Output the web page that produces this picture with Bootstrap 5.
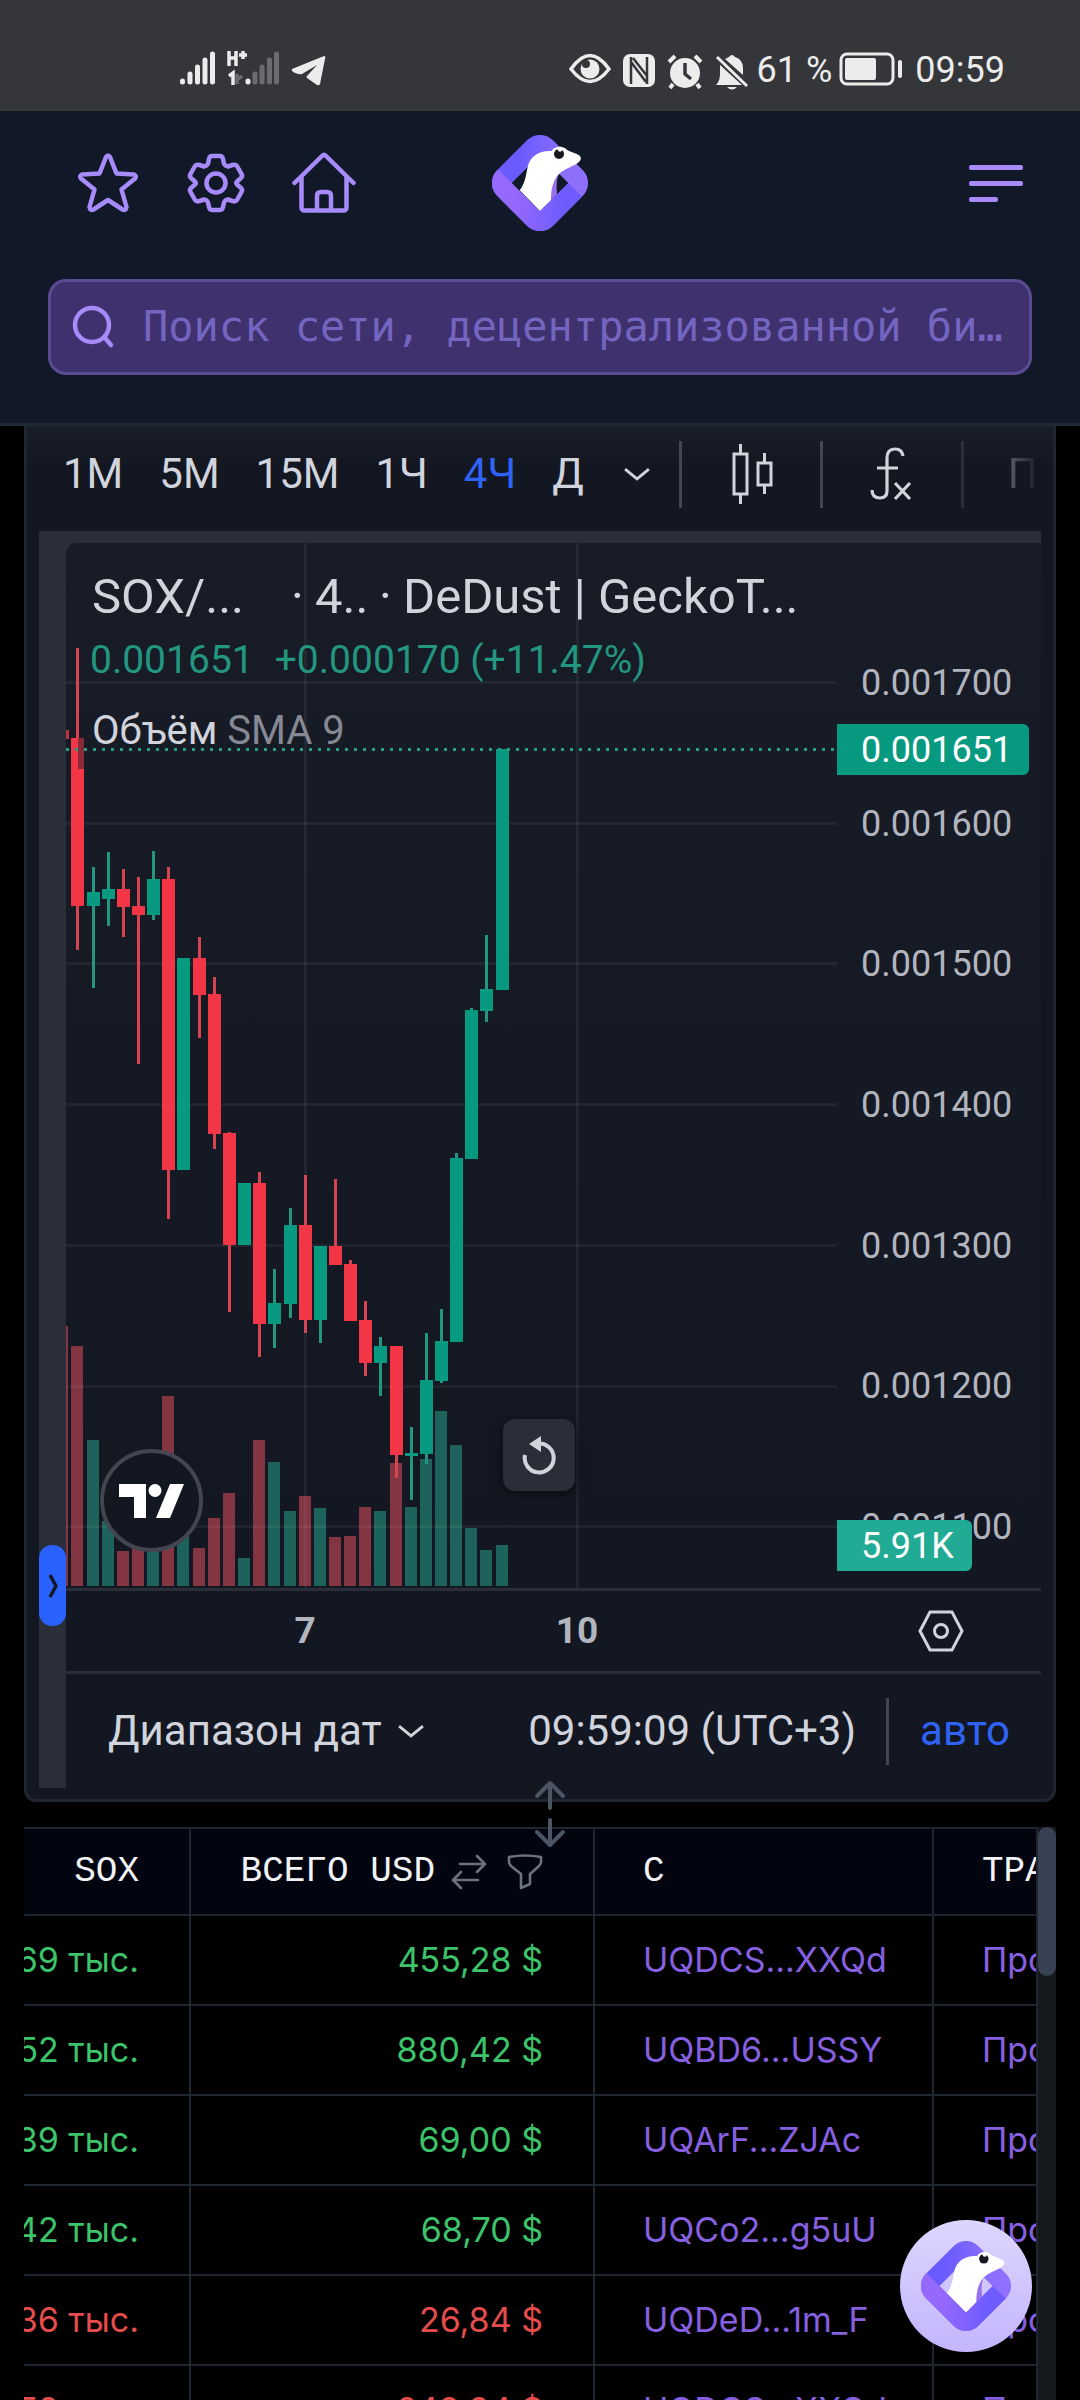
<!DOCTYPE html>
<html lang="ru" data-bs-theme="dark">
<head>
<meta charset="utf-8">
<meta name="viewport" content="width=device-width, initial-scale=1">
<title>SOX / DeDust</title>
<link href="https://cdn.jsdelivr.net/npm/bootstrap@5.3.0/dist/css/bootstrap.min.css" rel="stylesheet">
<style>
body{background:#000;font-family:Inter,"Liberation Sans",sans-serif;color:#e5e7eb;height:100vh;overflow:hidden}
svg{display:block;flex:none}
.phone-bar{height:111px;background:#35363a;color:#ececec;padding:46px 75px 0 179px;font:36px/48px Roboto,sans-serif}
.ic-plane{margin:9px 0 0 12px}
.ic-eye{margin:6px 12px 0 0}
.ic-battery{margin:6px 12px 0 7px}
.site-head{background:#111827;border-bottom:3px solid #1f2937;height:315px;padding:0 48px}
.head-icons{height:144px;padding:0 9px 0 30px}
.head-icons a,.head-icons button{color:#a78bfa;background:none;border:0;padding:0}
.home-link{margin-left:46px}
.search-box{height:96px;margin-top:24px;border:3px solid #5b4b92;border-radius:18px;background:#3f316e;padding:0 21px}
.search-box input{font:42px/60px "DejaVu Sans Mono",monospace;background:none;border:0;outline:0;color:#fff;min-width:0;margin-left:27px;padding:0;text-overflow:ellipsis}
.search-box input::placeholder{color:#7365c0;opacity:1}
.panel{margin:0 24px;border:3px solid #1f2632;border-top:0;border-radius:0 0 12px 12px;background:#131722;color:#d1d4dc;font-family:Roboto,sans-serif;padding:0 12px 11px}
.panel button{color:inherit;background:none;border:0;padding:0;font-size:42px;line-height:48px;white-space:nowrap}
.tf-bar{height:105px;margin:0 -12px;padding:0 0 9px 36px;background:linear-gradient(#1a1e29,#131722 40px)}
.tf-bar .active,.range-bar .auto-btn{color:#2f63f5}
.tf-list{gap:36px}
.tf-more{margin:0 29px 0 40px}
.tf-candles{margin:0 46px 0 48px}
.tf-fx{margin:0 49px 0 47px}
.panel .tf-last{margin-left:42px;width:34px;overflow:hidden;-webkit-mask-image:linear-gradient(90deg,#0006,#0000)}
.tf-sep{width:3px;height:67px;background:#434651;flex:none}
.gray-edge{background:#2a2e39}
.side-rail{width:27px;background:#2a2e39;position:relative;flex:none}
.side-rail button{position:absolute;left:0;top:1014px;width:27px;height:81px;border-radius:13px;background:#2962ff}
.pane-top{height:12px;background:#2a2e39}
.plot-row{background:linear-gradient(#181c27,#131722);border-radius:10px 0 0 0;height:1045px;position:relative}
.plot{position:relative;min-width:0}
.plot svg.candles{width:100%;height:1045px}
.legend{position:absolute;left:26px;top:23px;font-size:49px;line-height:62px;white-space:nowrap}
.lg-name{width:199px}.lg-dot{width:24px}.lg-tf{width:64px}.lg-dot2{width:24px}
.legend .vals{font-size:39px;line-height:48px;color:#22967f;margin-top:8px;margin-left:-2px}
.legend .vals span+span{margin-left:21px}
.legend .vol{font-size:40px;line-height:48px;margin-top:23px}
.legend .vol span{color:#868993}
.price-axis{width:204px;flex:none;padding:125px 0 46px 24px;font-size:36px;line-height:30px;color:#b2b5be}
.tag{position:absolute;right:12px;top:181px;width:192px;height:51px;line-height:53px;padding-left:24px;font-size:36px;color:#fff;background:#089981;border-radius:0 6px 6px 0}
.tag.vol-tag{right:69px;top:977px;width:135px;background:#22ab94}
.tv-badge{position:absolute;left:34px;top:906px;width:103px;height:103px;border-radius:50%;border:4px solid #434651;background:#131722}
.panel .reset-btn{position:absolute;left:437px;top:876px;width:72px;height:72px;border-radius:12px;background:#2a2e39;box-shadow:0 3px 10px #0008}
.time-axis{height:83px;border-top:3px solid #2a2e39;position:relative;font-size:37px;font-weight:700;line-height:80px;color:#b2b5be;padding-right:77px}
.time-axis .tick{position:absolute;top:0;transform:translateX(-50%)}
.tick-a{left:239px}.tick-b{left:511px}
.range-bar{height:117px;border-top:3px solid #2a2e39;padding:0 31px 0 42px}
.rb-sep{margin:0 31px 0 30px}
.grip{position:absolute;left:51%;transform:translateX(-50%);top:100%;margin-top:-19px;z-index:3}
.feed{margin:25px 24px 0;min-height:0;position:relative}
.feed table{table-layout:fixed;width:100%;margin:0;font-size:34px;line-height:42px;white-space:nowrap;border-collapse:collapse}
.feed th,.feed td{overflow:hidden;border:2px solid #1f2630;border-width:2px 2px 2px 0;height:90px;padding:0 50px 0 48px;vertical-align:middle}
.feed th{background:#02050f;height:87px;font:36px/42px "Liberation Mono",monospace;color:#f1f3f6}
.feed .up{color:#3cc46b}.feed .down{color:#e64c4c}
.feed a{color:#8660e0;text-decoration:none}
.feed .c-sox{width:166px;padding-left:0}.feed .c-usd{width:404px}.feed .c-from{width:339px}
.usd-swap{margin:0 20px 0 16px}
.scroll-track{width:18px;background:#15191e;flex:none}
.scroll-thumb{height:149px;background:#374151;border-radius:9px}
.chat-btn{position:absolute;right:24px;bottom:48px;width:132px;height:132px;border-radius:50%;border:0;padding:0;background:linear-gradient(#ddd6fe,#c4b5fd);z-index:4}
</style>
<script src="https://cdn.jsdelivr.net/npm/bootstrap@5.3.0/dist/js/bootstrap.bundle.min.js"></script>
</head>
<body class="d-flex flex-column">
<svg width="0" height="0" class="position-absolute" aria-hidden="true">
<defs>
<linearGradient id="ga" gradientUnits="userSpaceOnUse" x1="65" y1="150" x2="175" y2="45"><stop offset="0" stop-color="#6a5bff"/><stop offset="1" stop-color="#8f70fc"/></linearGradient>
<linearGradient id="gb" gradientUnits="userSpaceOnUse" x1="180" y1="290" x2="290" y2="190"><stop offset="0" stop-color="#9669fd"/><stop offset="1" stop-color="#6f5cff"/></linearGradient>
<clipPath id="cb"><path d="M10 90 95 174 180 258 265 174 330 236V340H10z"/></clipPath>
<symbol id="gecko" viewBox="36 30 288 288">
<rect x="91" y="85" width="178" height="178" rx="26" transform="rotate(45 180 174)" fill="none" stroke="url(#ga)" stroke-width="58"/>
<g clip-path="url(#cb)"><rect x="91" y="85" width="178" height="178" rx="26" transform="rotate(45 180 174)" fill="none" stroke="url(#gb)" stroke-width="58"/></g>
<path d="M236 148C228 168 230 190 231 208L205 234 215 165z" fill="#9a6fee"/>
<path d="M119 196C135 176 138 150 143 125 150 92 182 75 215 78 220 66 242 60 256 70 262 79 282 82 296 90 308 98 303 110 285 119 262 130 240 138 228 158 216 178 213 200 213 225L180 258z" fill="#fff"/>
<circle cx="237" cy="87" r="15" fill="#16181d"/><circle cx="240" cy="73" r="7" fill="#fff"/>
</symbol>
<symbol id="chev" viewBox="0 0 24 12"><path d="M1 1 12 10 23 1" fill="none" stroke="currentColor" stroke-width="2.6"/></symbol>
</defs>
</svg>

<div class="phone-bar d-flex align-items-start flex-shrink-0">
<svg width="36" height="36" viewBox="0 0 36 36" class="mt-1" stroke="#ececec" stroke-width="5" stroke-linecap="round"><path d="M3.500 32v-1M11 32V24M18.500 32V17M26 32V10M33.500 32V4"/></svg>
<svg width="56" height="36" viewBox="0 0 56 36" class="mt-1 ms-2" fill="none" stroke="#ececec" stroke-width="3.500"><path d="M6 1v15M13 1v15M6 8h7M16 5h8M20 1v8M6 26l4-3v12"/><path d="M14 24v10M14 30l5-4" stroke="#6b6c70"/><path d="M25 32v-1" stroke-width="5" stroke-linecap="round"/><path d="M32 32V24M39 32V17M46.500 32V10M53.500 32V4" stroke="#6b6c70" stroke-width="5" stroke-linecap="round"/></svg>
<svg width="36" height="32" viewBox="0 0 36 32" class="ic-plane"><path d="M1 14 33 1Q35 1 34 4L29 29Q28 31 26 30L16 23Q15 22 16 21L26 10 11 19Q8 20 2 17 0 15 1 14z" fill="#ececec"/></svg>
<div class="ms-auto d-flex">
<svg width="42" height="34" viewBox="0 0 42 34" class="ic-eye"><path d="M2 17Q21 -10 40 17 21 42 2 17z" fill="none" stroke="#ececec" stroke-width="3.500"/><circle cx="21" cy="17" r="9.500" fill="#ececec"/><circle cx="17" cy="12" r="4" fill="#35363a"/></svg>
<svg width="32" height="34" viewBox="0 0 32 34" class="mt-2 me-2"><rect width="32" height="33" rx="7" fill="#ececec"/><path d="M8 3v27M8 8l15 20M24 3v27M10 4l14 18" fill="none" stroke="#35363a" stroke-width="2.500"/></svg>
<svg width="36" height="36" viewBox="0 0 36 36" class="mt-2 me-2 ms-1"><circle cx="18" cy="19" r="15" fill="#ececec"/><path d="M2 8 8 2M34 8 28 2M6 30l-3 4M30 30l3 4" stroke="#ececec" stroke-width="4"/><path d="M18 9v11l6 5" fill="none" stroke="#35363a" stroke-width="3.500"/></svg>
<svg width="34" height="36" viewBox="0 0 34 36" class="mt-2 me-2 ms-1"><path d="M5 11 27 31H1Q5 27 5 20zM10 5Q12 4 14 3 17-1 20 3 28 5 28 15V21zM12 33h10q-5 5-10 0z" fill="#ececec"/><path d="M2 3 32 32" stroke="#ececec" stroke-width="3"/></svg>
<span>61 %</span>
<svg width="64" height="34" viewBox="0 0 64 34" class="ic-battery"><rect x="2" y="2" width="52" height="30" rx="6" fill="none" stroke="#ececec" stroke-width="3"/><rect x="6" y="6" width="31" height="22" rx="2" fill="#ececec"/><path d="M61 10v14" stroke="#ececec" stroke-width="4" stroke-linecap="round"/></svg>
<span>09:59</span>
</div>
</div>

<header class="site-head flex-shrink-0">
<div class="head-icons position-relative d-flex align-items-center">
<a href="#" aria-label="Избранное"><svg width="60" height="60" viewBox="0 0 60 60" fill="none" stroke="currentColor" stroke-width="4.500" stroke-linejoin="round"><path d="M28 4Q30 1 32 4L38.500 20.500 56 21.500Q59 23 57 25.500L43.500 36.500 48.500 54Q48 58 44.500 56.500L30 47 15.500 56.500Q12 58 11.500 54L16.500 36.500 3 25.500Q1 23 4 21.500L21.500 20.500z"/></svg></a>
<a href="#" aria-label="Настройки" class="ms-5"><svg width="60" height="60" viewBox="0 0 60 60" fill="none" stroke="currentColor" stroke-width="4.500" stroke-linejoin="round"><circle cx="30" cy="30" r="9.500"/><path d="M23 6Q23.500 3 26 3H34Q36.500 3 37 6L38 10.500Q39 13 42 13.500L46.500 12Q49.500 11 51 13L55.500 21Q57 23.500 54.500 25.500L51 28.500Q49.500 30 51 31.500L54.500 34.500Q57 36.500 55.500 39L51 47Q49.500 49 46.500 48L42 46.500Q39 47 38 49.500L37 54Q36.500 57 34 57H26Q23.500 57 23 54L22 49.500Q21 47 18 46.500L13.500 48Q10.500 49 9 47L4.500 39Q3 36.500 5.500 34.500L9 31.500Q10.500 30 9 28.500L5.500 25.500Q3 23.500 4.500 21L9 13Q10.500 11 13.500 12L18 13.500Q21 13 22 10.500z"/></svg></a>
<a href="#" aria-label="Главная" class="home-link"><svg width="64" height="62" viewBox="0 0 64 62" fill="none" stroke="currentColor" stroke-width="4.500" stroke-linejoin="round" stroke-linecap="round"><path d="M2.500 31 30 4Q32 2 34 4L61.500 31M9.500 25V55Q9.500 58.500 13 58.500H51Q54.500 58.500 54.500 55V25M25 58V44Q25 40 29 40H35Q39 40 39 44V58"/></svg></a>
<a href="#" aria-label="GeckoTerminal" class="position-absolute top-50 start-50 translate-middle"><svg width="98" height="96"><use href="#gecko"/></svg></a>
<button type="button" aria-label="Меню" class="ms-auto"><svg width="54" height="38" viewBox="0 0 54 38" fill="currentColor"><rect width="54" height="5" y="1" rx="2"/><rect width="54" height="5" y="17" rx="2"/><rect width="29" height="5" y="33" rx="2"/></svg></button>
</div>
<label class="search-box d-flex align-items-center">
<svg width="44" height="44" viewBox="0 0 44 44" fill="none" stroke="#a78bfa" stroke-width="4.500" stroke-linecap="round"><circle cx="20" cy="20" r="17"/><path d="M33 33 39 40"/></svg>
<input type="text" class="flex-grow-1" aria-label="Поиск" placeholder="Поиск сети, децентрализованной биржи">
</label>
</header>

<section class="panel position-relative flex-shrink-0">
<div class="tf-bar d-flex align-items-center">
<div class="d-flex tf-list">
<button type="button">1М</button><button type="button">5М</button><button type="button">15М</button><button type="button">1Ч</button><button type="button" class="active">4Ч</button><button type="button">Д</button>
</div>
<button type="button" class="tf-more" aria-label="Ещё"><svg width="26" height="13"><use href="#chev"/></svg></button>
<div class="tf-sep"></div>
<button type="button" class="tf-candles" aria-label="Свечи"><svg width="44" height="62" viewBox="0 0 44 62" fill="none" stroke="currentColor" stroke-width="3"><rect x="4" y="11" width="13" height="40"/><path d="M10.500 1v10M10.500 51v10M34.500 10v10M34.500 42v9"/><rect x="28" y="20" width="13" height="22"/></svg></button>
<div class="tf-sep"></div>
<button type="button" class="tf-fx" aria-label="Индикаторы"><svg width="42" height="54" viewBox="0 0 42 54" fill="none" stroke="currentColor" stroke-width="3.200"><path d="M33 9Q32 2 25 2 17 2 17 11V44Q17 51 10 51 2 51 2 43M7 21H28M25 36 40 52M40 36 25 52"/></svg></button>
<div class="tf-sep opacity-50"></div>
<button type="button" class="tf-last">П</button>
</div>
<div class="d-flex">
<div class="side-rail"><button type="button" aria-label="Панель рисования"><svg width="27" height="26" viewBox="0 0 27 26" fill="none" stroke="#131722" stroke-width="3.500"><path d="M11 2 17 13 11 24"/></svg></button></div>
<div class="flex-grow-1">
<div class="gray-edge"><div class="pane-top"></div>
<div class="plot-row d-flex">
<div class="plot flex-grow-1">
<svg class="candles" id="candles"></svg>
<div class="legend">
<div class="d-flex"><span class="lg-name">SOX/...</span><span class="lg-dot">·</span><span class="lg-tf">4..</span><span class="lg-dot2">·</span><span>DeDust | GeckoT...</span></div>
<div class="vals"><span>0.001651</span><span>+0.000170 (+11.47%)</span></div>
<div class="vol">Объём <span>SMA 9</span></div>
</div>
<div class="tv-badge d-flex align-items-center justify-content-center"><svg width="66" height="34" viewBox="0 0 66 34" fill="#fff"><path d="M0 0H27V34H15V13H0zM51 0H65L51 34H37z"/><circle cx="36" cy="6.500" r="6.500"/></svg></div>
<button type="button" class="reset-btn d-flex align-items-center justify-content-center" aria-label="Сбросить"><svg width="36" height="40" viewBox="0 0 36 40"><path d="M4 20A14.500 14.500 0 1 0 17 8.500" fill="none" stroke="#d1d4dc" stroke-width="4"/><path d="M20 1V17L8 9z" fill="#d1d4dc"/></svg></button>
</div>
<div class="price-axis d-flex flex-column justify-content-between"><span>0.001700</span><span>0.001600</span><span>0.001500</span><span>0.001400</span><span>0.001300</span><span>0.001200</span><span>0.001100</span></div>
<div class="tag">0.001651</div>
<div class="tag vol-tag">5.91K</div>
</div></div>
<div class="time-axis d-flex justify-content-end align-items-center"><span class="tick tick-a">7</span><span class="tick tick-b">10</span>
<button type="button" aria-label="Настройки шкалы"><svg width="46" height="42" viewBox="0 0 46 42" fill="none" stroke="#d1d4dc" stroke-width="3"><path d="M12 2H34L44 21 34 40H12L2 21z"/><circle cx="23" cy="21" r="6.500"/></svg></button></div>
<div class="range-bar d-flex align-items-center">
<button type="button" class="d-flex align-items-center">Диапазон дат<svg width="26" height="13" class="ms-3"><use href="#chev"/></svg></button>
<button type="button" class="ms-auto">09:59:09 (UTC+3)</button>
<div class="tf-sep rb-sep"></div>
<button type="button" class="auto-btn">авто</button>
</div>
</div>
</div>
<svg class="grip" width="32" height="68" viewBox="0 0 32 68" fill="none" stroke="#4b5563" stroke-width="4" stroke-linecap="round" stroke-linejoin="round"><path d="M16 28V3M3 16 16 3 29 16M16 40V65M3 52 16 65 29 52"/></svg>
</section>

<section class="feed d-flex flex-grow-1">
<div class="flex-grow-1 overflow-hidden">
<table>
<thead><tr>
<th class="c-sox text-end">SOX</th>
<th class="c-usd"><div class="d-flex justify-content-end align-items-center">ВСЕГО USD<svg width="36" height="36" viewBox="0 0 36 36" class="usd-swap" fill="none" stroke="#6b7280" stroke-width="2.600" stroke-linecap="round"><path d="M9 10H34M26 2 34 10 26 18M27 26H2M10 18 2 26 10 34"/></svg><svg width="36" height="36" viewBox="0 0 36 36" fill="none" stroke="#6b7280" stroke-width="2.600" stroke-linejoin="round"><path d="M2 3Q18 0 34 3V8Q34 10 32 12L23 20V30L14 34V20L4 12Q2 10 2 8z"/></svg></div></th>
<th class="c-from">С</th><th>ТРАНЗАКЦИЯ</th></tr></thead>
<tbody>
<tr><td class="c-sox up"><div class="d-flex justify-content-end">69 тыс.</div></td><td class="up text-end">455,28 $</td><td><a href="#">UQDCS...XXQd</a></td><td><a href="#">Просмотр</a></td></tr>
<tr><td class="c-sox up"><div class="d-flex justify-content-end">52 тыс.</div></td><td class="up text-end">880,42 $</td><td><a href="#">UQBD6...USSY</a></td><td><a href="#">Просмотр</a></td></tr>
<tr><td class="c-sox up"><div class="d-flex justify-content-end">39 тыс.</div></td><td class="up text-end">69,00 $</td><td><a href="#">UQArF...ZJAc</a></td><td><a href="#">Просмотр</a></td></tr>
<tr><td class="c-sox up"><div class="d-flex justify-content-end">42 тыс.</div></td><td class="up text-end">68,70 $</td><td><a href="#">UQCo2...g5uU</a></td><td><a href="#">Просмотр</a></td></tr>
<tr><td class="c-sox down"><div class="d-flex justify-content-end">36 тыс.</div></td><td class="down text-end">26,84 $</td><td><a href="#">UQDeD...1m_F</a></td><td><a href="#">Просмотр</a></td></tr>
<tr><td class="c-sox down"><div class="d-flex justify-content-end">52 тыс.</div></td><td class="down text-end">249,94 $</td><td><a href="#">UQDCS...XXQd</a></td><td><a href="#">Просмотр</a></td></tr>
</tbody>
</table>
</div>
<div class="scroll-track"><div class="scroll-thumb"></div></div>
<button type="button" class="chat-btn d-flex align-items-center justify-content-center" aria-label="Чат"><svg width="90" height="90"><use href="#gecko"/></svg></button>
</section>

<script>
// Each candle: x, direction, high, body top, body bottom, low
const candles = [
[5,0,105,195,363,407],[21,1,324,349,363,445],[36,1,309,346,356,383],[51,0,326,346,364,394],[66,0,334,363,372,521],
[81,1,308,336,372,377],[96,0,324,336,627,676],[111,1,415,415,627,627],[127,0,394,415,452,495],[142,0,434,451,591,606],
[157,0,589,590,702,769],[172,1,640,640,702,702],[187,0,629,640,781,814],[202,1,726,760,781,805],[218,1,665,682,761,775],
[233,0,632,682,777,790],[248,1,703,703,777,800],[263,0,636,703,722,722],[278,0,717,721,778,778],[293,0,758,777,820,833],
[308,1,794,803,820,853],[324,0,803,803,912,935],[339,1,884,910,913,957],[354,1,790,837,911,921],[369,1,766,798,838,840],
[384,1,610,615,799,799],[399,1,465,467,616,616],[414,1,392,446,468,479],[430,1,206,206,447,447]];
const volumeTop = [803,897,978,1008,1004,1003,853,987,1005,975,950,1015,897,919,968,953,965,994,993,964,968,920,964,916,868,902,985,1007,1002];
const grid = [139,280,420,561,702,843,983];
const bar = (x,y,w,h,c) => `<rect x="${x}" y="${y}" width="${w}" height="${h}" fill="${c}"/>`;
let out = bar(0,783,2,260,'#833541');
candles.forEach((k,i) => out += bar(k[0],volumeTop[i],12,1043-volumeTop[i],k[1] ? '#1d635b' : '#833541'));
grid.forEach(y => out += bar(0,y-1,'100%',3,'#f2f2f20f'));
out += bar(238,0,3,'100%','#f2f2f20f') + bar(510,0,3,'100%','#f2f2f20f');
out += bar(0,187,3,9,'#b83341');
candles.forEach(k => {
  out += bar(k[0]+5,k[2],3,k[5]-k[2],k[1] ? '#22967f' : '#d64454');
  out += bar(k[0],k[3],13,k[4]-k[3],k[1] ? '#089981' : '#f23645');
});
out += bar(12,195,6,31,'#8a2a38');
out += '<line x1="0" x2="100%" y1="206.5" y2="206.5" stroke="#2a9d86" stroke-width="3" stroke-dasharray="3 6"/>';
document.getElementById('candles').innerHTML = out;
</script>
</body>
</html>
